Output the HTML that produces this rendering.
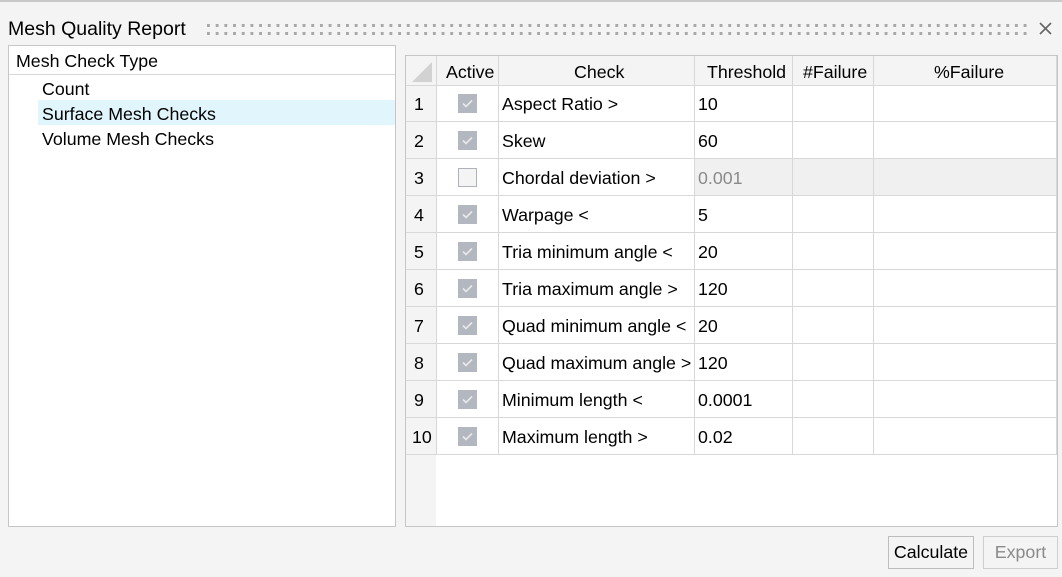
<!DOCTYPE html>
<html><head><style>
*{margin:0;padding:0;box-sizing:border-box}
body{width:1062px;height:577px;background:#f4f4f4;font-family:"Liberation Sans",Arial,sans-serif;position:relative;overflow:hidden;color:#000}
.a{position:absolute}
.t{font-size:17.8px;white-space:nowrap}
.cb{position:absolute;left:458px;width:19px;height:19px;background:#b3b7bf}
.cb svg{position:absolute;left:4px;top:5px}
.cbu{background:#f4f4f4;border:1px solid #aeb3bb}
.dots{position:absolute;left:207px;width:825px;height:3px;background-image:linear-gradient(90deg,#a8a8a8 3px,transparent 3px);background-size:8.7px 3px}
</style></head><body>
<div class="a" style="left:0;top:0;width:1062px;height:2px;background:#c9c9c9"></div>
<div class="a" style="left:8px;top:18px;font-size:19.5px;white-space:nowrap">Mesh Quality Report</div>
<div class="dots" style="top:24px"></div>
<div class="dots" style="top:32px"></div>
<svg class="a" style="left:1038px;top:21px" width="15" height="15" viewBox="0 0 15 15"><path d="M2 2L13 13M13 2L2 13" stroke="#666" stroke-width="1.6"/></svg>

<div class="a" style="left:8px;top:45px;width:388px;height:482px;background:#fff;border:1px solid #c6c6c6"></div>
<div class="a" style="left:9px;top:46px;width:386px;height:29px;border-bottom:1px solid #d8d8d8"></div>
<div class="a t" style="left:16px;top:51px">Mesh Check Type</div>
<div class="a" style="left:38px;top:100px;width:357px;height:25px;background:#e1f5fc"></div>
<div class="a t" style="left:42px;top:79px">Count</div>
<div class="a t" style="left:42px;top:104px">Surface Mesh Checks</div>
<div class="a t" style="left:42px;top:129px">Volume Mesh Checks</div>

<div class="a" style="left:405px;top:55px;width:653px;height:472px;background:#fff;border:1px solid #c6c6c6"></div>
<div class="a" style="left:406px;top:56px;width:30px;height:470px;background:#f4f4f4"></div>
<div class="a" style="left:436px;top:56px;width:621px;height:29px;background:#f4f4f4"></div>
<div class="a" style="left:695px;top:159px;width:361px;height:36px;background:#f0f0f0"></div>
<svg class="a" style="left:412px;top:62px" width="20" height="20"><path d="M20 0L20 20L0 20Z" fill="#d2d2d2"/></svg>
<div class="a" style="left:406px;top:85px;width:651px;height:1px;background:#d8d8d8"></div>
<div class="a" style="left:436px;top:56px;width:1px;height:399px;background:#d8d8d8"></div>
<div class="a" style="left:498px;top:56px;width:1px;height:399px;background:#d8d8d8"></div>
<div class="a" style="left:694px;top:56px;width:1px;height:399px;background:#d8d8d8"></div>
<div class="a" style="left:792px;top:56px;width:1px;height:399px;background:#d8d8d8"></div>
<div class="a" style="left:873px;top:56px;width:1px;height:399px;background:#d8d8d8"></div>
<div class="a" style="left:1056px;top:56px;width:1px;height:399px;background:#d8d8d8"></div>
<div class="a t" style="left:446px;top:62px">Active</div>
<div class="a t" style="left:574px;top:62px">Check</div>
<div class="a t" style="left:707px;top:62px">Threshold</div>
<div class="a t" style="left:803px;top:62px">#Failure</div>
<div class="a t" style="left:934px;top:62px">%Failure</div>

<div id="rows"></div>
<script>
var d=[["Aspect Ratio >","10"],["Skew","60"],["Chordal deviation >","0.001"],["Warpage <","5"],["Tria minimum angle <","20"],["Tria maximum angle >","120"],["Quad minimum angle <","20"],["Quad maximum angle >","120"],["Minimum length <","0.0001"],["Maximum length >","0.02"]];
var h="";
for(var i=0;i<10;i++){var y=85+i*37;
h+='<div class="a" style="left:406px;top:'+(y+36)+'px;width:651px;height:1px;background:#d8d8d8"></div>';
h+='<div class="a t" style="left:'+(i==9?412:414)+'px;top:'+(y+9)+'px">'+(i+1)+'</div>';
if(i==2)h+='<div class="cb cbu" style="top:'+(y+9)+'px"></div>';
else h+='<div class="cb" style="top:'+(y+9)+'px"><svg width="11" height="9"><path d="M1 4.5L4 7.5L10 1.5" stroke="#e8e9ec" stroke-width="1.6" fill="none"/></svg></div>';
h+='<div class="a t" style="left:502px;top:'+(y+9)+'px">'+d[i][0]+'</div>';
h+='<div class="a t" style="left:698px;top:'+(y+9)+'px;'+(i==2?'color:#8a8a8a':'')+'">'+d[i][1]+'</div>';}
document.getElementById("rows").innerHTML=h;
</script>

<div class="a t" style="left:888px;top:536px;width:86px;height:33px;border:1px solid #bdbdbd;background:#f4f4f4;text-align:center;line-height:31px">Calculate</div>
<div class="a t" style="left:983px;top:536px;width:75px;height:33px;border:1px solid #cfcfcf;background:#f4f4f4;text-align:center;line-height:31px;color:#8a8a8a">Export</div>
</body></html>
